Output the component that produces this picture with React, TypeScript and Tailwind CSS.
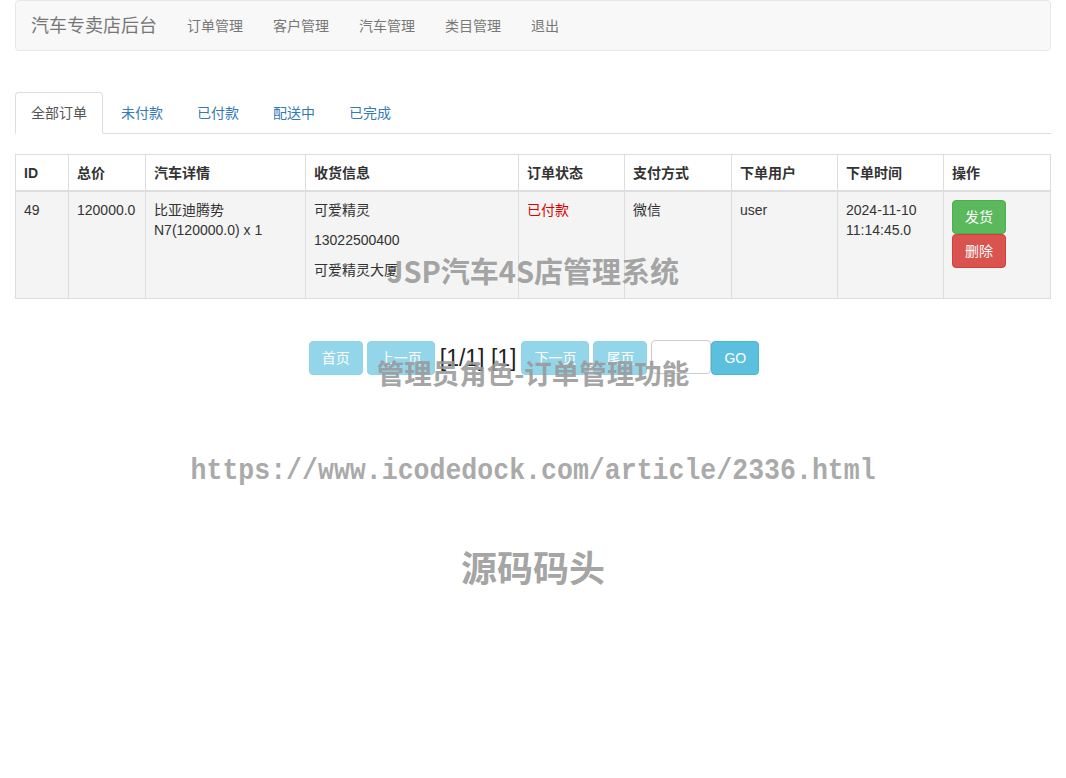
import React from "react";

const font = "font-['Liberation_Sans','Noto_Sans_CJK_SC',sans-serif]";

const navLinks = ["订单管理", "客户管理", "汽车管理", "类目管理", "退出"];
const tabs = ["全部订单", "未付款", "已付款", "配送中", "已完成"];

const columns = [
  { title: "ID", w: "w-[53px]" },
  { title: "总价", w: "w-[77px]" },
  { title: "汽车详情", w: "w-[160px]" },
  { title: "收货信息", w: "w-[213px]" },
  { title: "订单状态", w: "w-[106px]" },
  { title: "支付方式", w: "w-[107px]" },
  { title: "下单用户", w: "w-[106px]" },
  { title: "下单时间", w: "w-[106px]" },
  { title: "操作", w: "w-[107px]" },
];

const App = () => {
  return (
    <div className={`relative min-h-[778px] bg-white text-[14px] leading-[20px] text-[#333] ${font}`}>
      <div className="px-[15px]">
        {/* navbar */}
        <div className="flex h-[51px] items-center rounded border border-[#e7e7e7] bg-[#f8f8f8]">
          <span className="px-[15px] text-[18px] text-[#777]">汽车专卖店后台</span>
          {navLinks.map((l) => (
            <a key={l} className="px-[15px] text-[#777]">
              {l}
            </a>
          ))}
        </div>

        {/* tabs */}
        <ul className="mt-[41px] flex border-b border-[#ddd]">
          {tabs.map((t, i) => (
            <li key={t} className="-mb-px mr-[2px]">
              <a
                className={
                  i === 0
                    ? "block rounded-t border border-[#ddd] border-b-white bg-white px-[15px] py-[10px] text-[#555]"
                    : "block rounded-t border border-transparent px-[15px] py-[10px] text-[#337ab7]"
                }
              >
                {t}
              </a>
            </li>
          ))}
        </ul>

        {/* table */}
        <table className="mt-[20px] w-full table-fixed border-collapse border border-[#ddd]">
          <thead>
            <tr>
              {columns.map((c) => (
                <th
                  key={c.title}
                  className={`${c.w} border border-b-2 border-[#ddd] px-[8px] pt-[8px] pb-[7px] text-left font-bold`}
                >
                  {c.title}
                </th>
              ))}
            </tr>
          </thead>
          <tbody>
            <tr className="bg-[#f4f4f4] align-top">
              <td className="border border-[#ddd] p-[8px]">49</td>
              <td className="border border-[#ddd] p-[8px]">120000.0</td>
              <td className="border border-[#ddd] p-[8px]">
                比亚迪腾势
                <br />
                N7(120000.0) x 1
              </td>
              <td className="border border-[#ddd] p-[8px]">
                <p className="mb-[10px]">可爱精灵</p>
                <p className="mb-[10px]">13022500400</p>
                <p className="mb-[10px]">可爱精灵大厦</p>
              </td>
              <td className="border border-[#ddd] p-[8px] text-[#d00]">已付款</td>
              <td className="border border-[#ddd] p-[8px]">微信</td>
              <td className="border border-[#ddd] p-[8px]">user</td>
              <td className="border border-[#ddd] p-[8px]">
                2024-11-10
                <br />
                11:14:45.0
              </td>
              <td className="border border-[#ddd] p-[8px]">
                <div className="flex flex-col items-start">
                  <button className="rounded border border-[#4cae4c] bg-[#5cb85c] px-[12px] py-[6px] text-white">
                    发货
                  </button>
                  <button className="rounded border border-[#d43f3a] bg-[#d9534f] px-[12px] py-[6px] text-white">
                    删除
                  </button>
                </div>
              </td>
            </tr>
          </tbody>
        </table>

        {/* pagination */}
        <div className="mt-[41px] flex items-center justify-center gap-[4px] pl-[2px]">
          <button className="rounded border border-[#90d4e9] bg-[#94d6e9] px-[12px] py-[6px] text-white">首页</button>
          <button className="rounded border border-[#90d4e9] bg-[#94d6e9] px-[12px] py-[6px] text-white">上一页</button>
          <span className="px-[1px] text-[23px] leading-[26px] text-[#222]">[1/1] [1]</span>
          <button className="rounded border border-[#90d4e9] bg-[#94d6e9] px-[12px] py-[6px] text-white">下一页</button>
          <button className="rounded border border-[#90d4e9] bg-[#94d6e9] px-[12px] py-[6px] text-white">尾页</button>
          <div className="flex items-center">
            <input className="mb-[2px] h-[34px] w-[60px] rounded border border-[#ccc] bg-white" />
            <button className="rounded border border-[#46b8da] bg-[#5bc0de] px-[12px] py-[6px] text-white">GO</button>
          </div>
        </div>
      </div>

      {/* watermark */}
      <div className="pointer-events-none absolute inset-x-0 top-[251px] text-center font-['Noto_Sans_CJK_SC',sans-serif] text-[29px] font-bold leading-[38px] text-[#999]/90">
        JSP汽车4S店管理系统
      </div>
      <div className="pointer-events-none absolute inset-x-0 top-[353px] text-center font-['Noto_Sans_CJK_SC',sans-serif] text-[27.5px] font-bold leading-[38px] text-[#999]/90">
        管理员角色-订单管理功能
      </div>
      <div className="pointer-events-none absolute inset-x-0 top-[452px] flex justify-center">
        <span className="inline-block scale-x-[0.885] whitespace-nowrap font-['Liberation_Mono',monospace] text-[30px] font-bold leading-[38px] text-[#aaa]">
          https://www.icodedock.com/article/2336.html
        </span>
      </div>
      <div className="pointer-events-none absolute inset-x-0 top-[544px] text-center font-['Noto_Sans_CJK_SC',sans-serif] text-[36px] font-bold leading-[44px] text-[#999]/90">
        源码码头
      </div>
    </div>
  );
};

export default App;
